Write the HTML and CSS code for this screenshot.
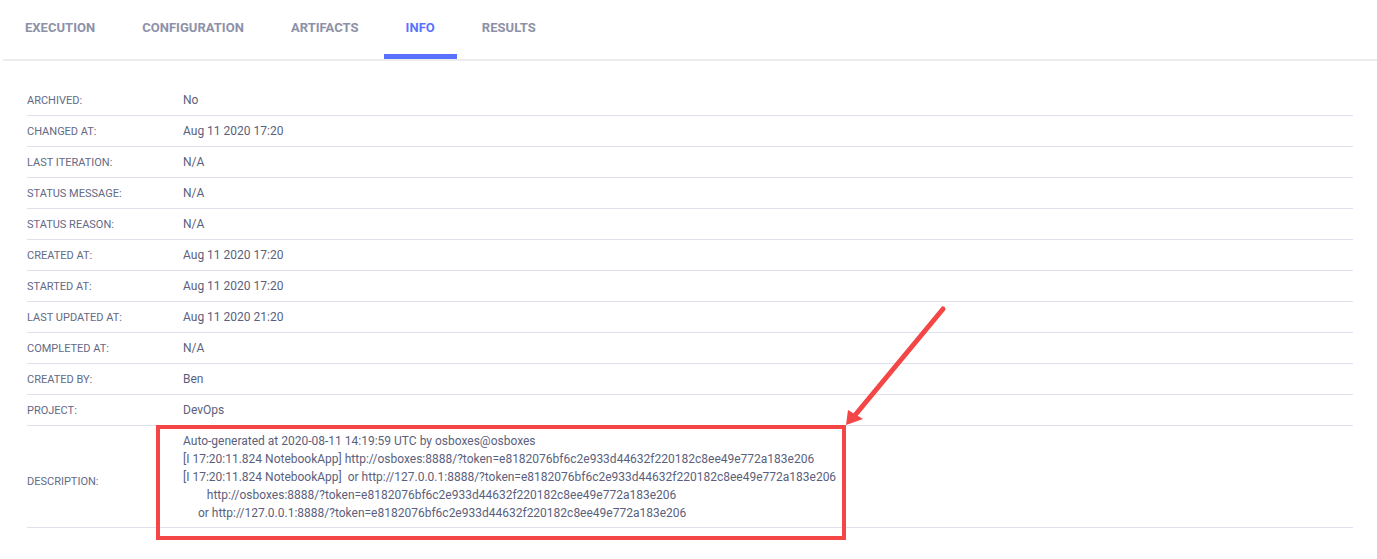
FILE: index.html
```html
<!DOCTYPE html>
<html lang="en">
<head>
  <meta charset="UTF-8">
  <title>Task Info</title>
  <link rel="stylesheet" href="styles.css">
</head>
<body>
  <div class="page">

    <!-- Tabs -->
    <div class="tabs">
      <a class="tab">EXECUTION</a>
      <a class="tab">CONFIGURATION</a>
      <a class="tab">ARTIFACTS</a>
      <a class="tab active">INFO</a>
      <a class="tab">RESULTS</a>
    </div>

    <!-- Info table -->
    <div class="info">
      <div class="row"><div class="label">ARCHIVED:</div><div class="value">No</div></div>
      <div class="row"><div class="label">CHANGED AT:</div><div class="value">Aug 11 2020 17:20</div></div>
      <div class="row"><div class="label">LAST ITERATION:</div><div class="value">N/A</div></div>
      <div class="row"><div class="label">STATUS MESSAGE:</div><div class="value">N/A</div></div>
      <div class="row"><div class="label">STATUS REASON:</div><div class="value">N/A</div></div>
      <div class="row"><div class="label">CREATED AT:</div><div class="value">Aug 11 2020 17:20</div></div>
      <div class="row"><div class="label">STARTED AT:</div><div class="value">Aug 11 2020 17:20</div></div>
      <div class="row"><div class="label">LAST UPDATED AT:</div><div class="value">Aug 11 2020 21:20</div></div>
      <div class="row"><div class="label">COMPLETED AT:</div><div class="value">N/A</div></div>
      <div class="row"><div class="label">CREATED BY:</div><div class="value">Ben</div></div>
      <div class="row"><div class="label">PROJECT:</div><div class="value">DevOps</div></div>
      <div class="row desc">
        <div class="label">DESCRIPTION:</div>
        <div class="value">Auto-generated at 2020-08-11 14:19:59 UTC by osboxes@osboxes
[I 17:20:11.824 NotebookApp] http://osboxes:8888/?token=e8182076bf6c2e933d44632f220182c8ee49e772a183e206
[I 17:20:11.824 NotebookApp]  or http://127.0.0.1:8888/?token=e8182076bf6c2e933d44632f220182c8ee49e772a183e206
        http://osboxes:8888/?token=e8182076bf6c2e933d44632f220182c8ee49e772a183e206
     or http://127.0.0.1:8888/?token=e8182076bf6c2e933d44632f220182c8ee49e772a183e206</div>
      </div>
    </div>

    <!-- Annotation -->
    <div class="highlight"></div>
    <svg class="arrow" width="110" height="130" viewBox="840 300 110 130">
      <line x1="943" y1="309" x2="856" y2="414" stroke="#f44646" stroke-width="5" stroke-linecap="round"/>
      <polygon points="846,425 848,410 863,419" fill="#f44646"/>
    </svg>

  </div>
</body>
</html>
```

FILE: styles.css
```css
body {
  margin: 0;
  background-color: #fff;
  font-family: Roboto, "Liberation Sans", sans-serif;
}

.page {
  position: relative;
  width: 1377px;
  height: 559px;
  overflow: hidden;
}

/* Tabs */
.tabs {
  display: flex;
  gap: 3px;
  margin-left: 3px;
  border-bottom: 2px solid #ececef;
}

.tab {
  height: 53px;
  line-height: 53px;
  padding: 1px 22px 0;
  font-size: 13px;
  font-weight: 700;
  letter-spacing: 0.03px;
  color: #8d91a8;
  border-bottom: 5px solid transparent;
  cursor: pointer;
}

.tab.active {
  color: #5a73ff;
  border-bottom-color: #5a70ff;
}

/* Info table */
.info {
  margin: 24px 24px 0 27px;
}

.row {
  display: flex;
  align-items: center;
  height: 30px;
  border-bottom: 1px solid #dfe0ee;
}

.label {
  width: 156px;
  flex-shrink: 0;
  font-size: 11px;
  color: #646985;
}

.value {
  font-size: 12px;
  color: #5b5f7d;
}

.row.desc {
  height: auto;
  padding: 6px 0 5px;
}

.row.desc .label {
  padding-top: 8px;
}

.row.desc .value {
  white-space: pre;
  line-height: 18px;
}

/* Annotation */
.highlight {
  position: absolute;
  left: 156px;
  top: 425px;
  width: 682px;
  height: 107px;
  border: 4px solid #f44646;
}

.arrow {
  position: absolute;
  left: 840px;
  top: 300px;
}
```
